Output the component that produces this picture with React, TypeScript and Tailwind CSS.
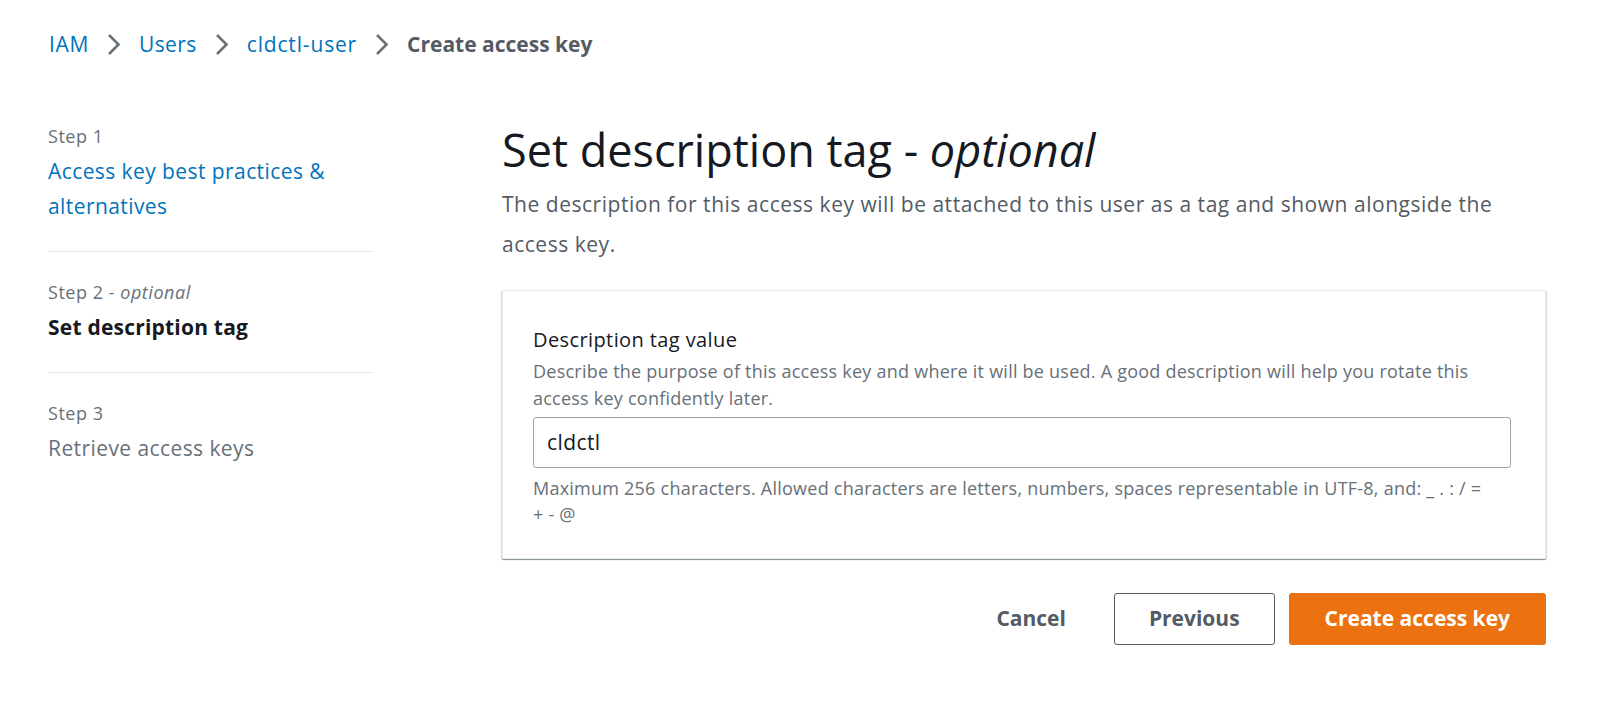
import React from 'react';

const FONT = '"Open Sans", "Noto Sans", Arial, sans-serif';

function Chevron() {
  return (
    <svg className="mx-[18px] h-[23px] w-[14px] shrink-0" viewBox="0 0 14 23" fill="none">
      <path d="M2 2 L11.5 11.5 L2 21" stroke="#687078" strokeWidth={2.6} strokeLinecap="butt" />
    </svg>
  );
}

function Breadcrumbs() {
  return (
    <nav className="flex items-center pl-[49px] pt-[29px] text-[21px] leading-[30px]">
      <a className="tracking-[0.03em] text-[#0073bb]">IAM</a>
      <Chevron />
      <a className="tracking-[0.02em] text-[#0073bb]">Users</a>
      <Chevron />
      <a className="tracking-[0.04em] text-[#0073bb]">cldctl-user</a>
      <Chevron />
      <span className="font-bold text-[#545b64]">Create access key</span>
    </nav>
  );
}

interface StepProps {
  label: string;
  optional?: boolean;
  title: string;
  state: 'link' | 'active' | 'disabled';
}

function Step({ label, optional, title, state }: StepProps) {
  const titleClass =
    state === 'link'
      ? 'tracking-[0.02em] text-[#0073bb]'
      : state === 'active'
        ? 'font-bold tracking-[0.01em] text-[#16191f]'
        : 'tracking-[0.02em] text-[#687078]';
  return (
    <li>
      <div className="text-[18px] leading-[26px] tracking-[0.03em] text-[#687078]">
        {label}
        {optional && <i> - optional</i>}
      </div>
      <div className={`mt-[5px] text-[21px] leading-[35px] ${titleClass}`}>{title}</div>
    </li>
  );
}

function Divider() {
  return <li className="my-[27px] h-px bg-[#e0e5e6]" />;
}

function Wizard() {
  return (
    <ul className="w-[325px] shrink-0">
      <Step label="Step 1" title="Access key best practices & alternatives" state="link" />
      <Divider />
      <Step label="Step 2" optional title="Set description tag" state="active" />
      <Divider />
      <Step label="Step 3" title="Retrieve access keys" state="disabled" />
    </ul>
  );
}

export default function App() {
  return (
    <div className="h-[718px] w-full bg-white" style={{ fontFamily: FONT }}>
      <Breadcrumbs />

      <div className="mt-[64px] flex items-start pl-[48px]">
        <Wizard />

        <main className="ml-[129px] w-[1044px]">
          <h1 className="text-[45px] font-normal leading-[54px] text-[#16191f]">
            Set description tag - <i>optional</i>
          </h1>
          <p className="mt-[7px] text-[21px] leading-[40px] tracking-[0.025em] text-[#545b64]">
            The description for this access key will be attached to this user as a tag and shown alongside the access key.
          </p>

          <section className="mt-[26px] rounded-[1px] border border-[#eaeded] bg-white pb-[31px] pl-[30px] pr-[34px] pt-[34px] shadow-[0_1px_1px_0_rgba(0,28,36,0.3),1px_1px_1px_0_rgba(0,28,36,0.15),-1px_1px_1px_0_rgba(0,28,36,0.15)]">
            <label className="block text-[20px] leading-[30px] tracking-[0.02em] text-[#16191f]">
              Description tag value
            </label>
            <p className="mt-[3px] text-[18px] leading-[27px] tracking-[0.013em] text-[#687078]">
              Describe the purpose of this access key and where it will be used. A good description will help you rotate this access key confidently later.
            </p>
            <div className="mt-[5px] flex h-[51px] items-center rounded-[3px] border border-[#9ba7a8] px-[13px] text-[21px] tracking-[0.02em] text-[#16191f]">
              cldctl
            </div>
            <p className="mt-[7px] pr-[22px] text-[18px] leading-[26px] tracking-[0.013em] text-[#687078]">
              Maximum 256 characters. Allowed characters are letters, numbers, spaces representable in UTF-8, and: _ . : / = + - @
            </p>
          </section>

          <div className="mt-[34px] flex items-center justify-end gap-[14px]">
            <button className="h-[52px] px-[34px] text-[21px] font-bold text-[#545b64]">Cancel</button>
            <button className="h-[52px] rounded-[3px] border-[1.5px] border-[#545b64] px-[34px] text-[21px] font-bold text-[#545b64]">
              Previous
            </button>
            <button className="h-[52px] rounded-[3px] bg-[#ec7211] px-[36px] text-[21px] font-bold text-white">
              Create access key
            </button>
          </div>
        </main>
      </div>
    </div>
  );
}
